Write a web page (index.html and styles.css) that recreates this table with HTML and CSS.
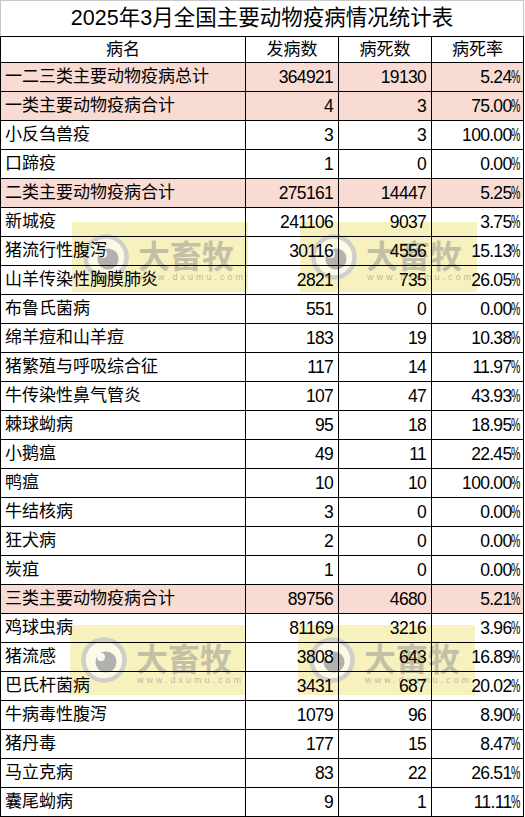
FILE: index.html
```html
<!DOCTYPE html>
<html lang="zh-CN">
<head>
<meta charset="utf-8">
<title>2025年3月全国主要动物疫病情况统计表</title>
<link rel="stylesheet" href="styles.css">
</head>
<body>
<div class="sheet">
  <div class="title">2025年3月全国主要动物疫病情况统计表</div>
  <div class="table">
    <div class="row head"><div class="c name">病名</div><div class="c">发病数</div><div class="c">病死数</div><div class="c">病死率</div></div>
    <div class="row sum"><div class="c name">一二三类主要动物疫病总计</div><div class="c num">364921</div><div class="c num">19130</div><div class="c pc">5.24<span class="p">%</span></div></div>
    <div class="row sum"><div class="c name">一类主要动物疫病合计</div><div class="c num">4</div><div class="c num">3</div><div class="c pc">75.00<span class="p">%</span></div></div>
    <div class="row"><div class="c name">小反刍兽疫</div><div class="c num">3</div><div class="c num">3</div><div class="c pc">100.00<span class="p">%</span></div></div>
    <div class="row"><div class="c name">口蹄疫</div><div class="c num">1</div><div class="c num">0</div><div class="c pc">0.00<span class="p">%</span></div></div>
    <div class="row sum"><div class="c name">二类主要动物疫病合计</div><div class="c num">275161</div><div class="c num">14447</div><div class="c pc">5.25<span class="p">%</span></div></div>
    <div class="row"><div class="c name">新城疫</div><div class="c num">241106</div><div class="c num">9037</div><div class="c pc">3.75<span class="p">%</span></div></div>
    <div class="row"><div class="c name">猪流行性腹泻</div><div class="c num">30116</div><div class="c num">4556</div><div class="c pc">15.13<span class="p">%</span></div></div>
    <div class="row"><div class="c name">山羊传染性胸膜肺炎</div><div class="c num">2821</div><div class="c num">735</div><div class="c pc">26.05<span class="p">%</span></div></div>
    <div class="row"><div class="c name">布鲁氏菌病</div><div class="c num">551</div><div class="c num">0</div><div class="c pc">0.00<span class="p">%</span></div></div>
    <div class="row"><div class="c name">绵羊痘和山羊痘</div><div class="c num">183</div><div class="c num">19</div><div class="c pc">10.38<span class="p">%</span></div></div>
    <div class="row"><div class="c name">猪繁殖与呼吸综合征</div><div class="c num">117</div><div class="c num">14</div><div class="c pc">11.97<span class="p">%</span></div></div>
    <div class="row"><div class="c name">牛传染性鼻气管炎</div><div class="c num">107</div><div class="c num">47</div><div class="c pc">43.93<span class="p">%</span></div></div>
    <div class="row"><div class="c name">棘球蚴病</div><div class="c num">95</div><div class="c num">18</div><div class="c pc">18.95<span class="p">%</span></div></div>
    <div class="row"><div class="c name">小鹅瘟</div><div class="c num">49</div><div class="c num">11</div><div class="c pc">22.45<span class="p">%</span></div></div>
    <div class="row"><div class="c name">鸭瘟</div><div class="c num">10</div><div class="c num">10</div><div class="c pc">100.00<span class="p">%</span></div></div>
    <div class="row"><div class="c name">牛结核病</div><div class="c num">3</div><div class="c num">0</div><div class="c pc">0.00<span class="p">%</span></div></div>
    <div class="row"><div class="c name">狂犬病</div><div class="c num">2</div><div class="c num">0</div><div class="c pc">0.00<span class="p">%</span></div></div>
    <div class="row"><div class="c name">炭疽</div><div class="c num">1</div><div class="c num">0</div><div class="c pc">0.00<span class="p">%</span></div></div>
    <div class="row sum"><div class="c name">三类主要动物疫病合计</div><div class="c num">89756</div><div class="c num">4680</div><div class="c pc">5.21<span class="p">%</span></div></div>
    <div class="row"><div class="c name">鸡球虫病</div><div class="c num">81169</div><div class="c num">3216</div><div class="c pc">3.96<span class="p">%</span></div></div>
    <div class="row"><div class="c name">猪流感</div><div class="c num">3808</div><div class="c num">643</div><div class="c pc">16.89<span class="p">%</span></div></div>
    <div class="row"><div class="c name">巴氏杆菌病</div><div class="c num">3431</div><div class="c num">687</div><div class="c pc">20.02<span class="p">%</span></div></div>
    <div class="row"><div class="c name">牛病毒性腹泻</div><div class="c num">1079</div><div class="c num">96</div><div class="c pc">8.90<span class="p">%</span></div></div>
    <div class="row"><div class="c name">猪丹毒</div><div class="c num">177</div><div class="c num">15</div><div class="c pc">8.47<span class="p">%</span></div></div>
    <div class="row"><div class="c name">马立克病</div><div class="c num">83</div><div class="c num">22</div><div class="c pc">26.51<span class="p">%</span></div></div>
    <div class="row"><div class="c name">囊尾蚴病</div><div class="c num">9</div><div class="c num">1</div><div class="c pc">11.11<span class="p">%</span></div></div>
  </div>

  <div class="wm wm-a">
    <svg class="logo" width="70" height="70" viewBox="0 0 70 70"><circle cx="34" cy="35" r="20.5" fill="rgba(255,255,255,0.6)" stroke="rgba(200,200,200,0.85)" stroke-width="4.5"/><circle cx="36" cy="37" r="10.5" fill="rgba(165,165,165,0.85)"/><circle cx="31" cy="32" r="4" fill="rgba(255,255,255,0.9)"/></svg>
    <div class="brand">大畜牧</div><div class="url">www.dxumu.com</div>
  </div>
  <div class="wm wm-b">
    <svg class="logo" width="70" height="70" viewBox="0 0 70 70"><circle cx="34" cy="35" r="20.5" fill="rgba(255,255,255,0.6)" stroke="rgba(200,200,200,0.85)" stroke-width="4.5"/><circle cx="36" cy="37" r="10.5" fill="rgba(165,165,165,0.85)"/><circle cx="31" cy="32" r="4" fill="rgba(255,255,255,0.9)"/></svg>
    <div class="brand">大畜牧</div><div class="url">www.dxumu.com</div>
  </div>
  <div class="wm wm-c">
    <svg class="logo" width="70" height="70" viewBox="0 0 70 70"><circle cx="34" cy="35" r="20.5" fill="rgba(255,255,255,0.6)" stroke="rgba(200,200,200,0.85)" stroke-width="4.5"/><circle cx="36" cy="37" r="10.5" fill="rgba(165,165,165,0.85)"/><circle cx="31" cy="32" r="4" fill="rgba(255,255,255,0.9)"/></svg>
    <div class="brand">大畜牧</div><div class="url">www.dxumu.com</div>
  </div>
  <div class="wm wm-d">
    <svg class="logo" width="70" height="70" viewBox="0 0 70 70"><circle cx="34" cy="35" r="20.5" fill="rgba(255,255,255,0.6)" stroke="rgba(200,200,200,0.85)" stroke-width="4.5"/><circle cx="36" cy="37" r="10.5" fill="rgba(165,165,165,0.85)"/><circle cx="31" cy="32" r="4" fill="rgba(255,255,255,0.9)"/></svg>
    <div class="brand">大畜牧</div><div class="url">www.dxumu.com</div>
  </div>
</div>
</body>
</html>
```
FILE: styles.css
```css
* { box-sizing: border-box; }
html, body { margin: 0; padding: 0; background: #fff; }
body {
  font-family: "Liberation Sans", "Noto Sans CJK SC", sans-serif;
  color: #000;
}
.sheet {
  position: relative;
  width: 525px;
}
.title {
  height: 36px;
  border: 1px solid #c8c8c8;
  border-bottom: none;
  width: 524px;
  font-size: 21.5px;
  line-height: 34px;
  text-align: center;
}
.table {
  position: relative;
  z-index: 2;
  border-left: 1px solid #000;
  border-top: 1px solid #000;
  width: 524px;
}
.row {
  display: grid;
  grid-template-columns: 245px 93px 93px 92px;
  height: 29px;
}
.row.head { height: 26px; }
.row.sum { background: #f8dcd3; }
.c {
  border-right: 1px solid #000;
  border-bottom: 1px solid #000;
  font-size: 17px;
  line-height: 28px;
  white-space: nowrap;
  overflow: hidden;
}
.head .c {
  text-align: center;
  line-height: 25px;
}
.row .name { padding-left: 4px; }
.head .name { padding-left: 0; }
.num, .pc {
  text-align: right;
  letter-spacing: -0.7px;
  font-size: 17.5px;
}
.num { padding-right: 5px; }
.pc { padding-right: 2px; }
.p {
  display: inline-block;
  transform: scaleX(0.6);
  transform-origin: left center;
  margin-right: -6px;
  letter-spacing: 0;
}

.wm {
  position: absolute;
  z-index: 1;
  width: 176px;
  height: 70px;
  background: rgba(238, 224, 110, 0.45);
}
.wm-a { left: 72px; top: 222px; }
.wm-b { left: 300px; top: 222px; width: 177px; }
.wm-c { left: 70px; top: 625px; }
.wm-d { left: 298px; top: 625px; width: 177px; }
.logo {
  position: absolute;
  left: 0;
  top: 0;
}
.brand {
  position: absolute;
  left: 66px;
  top: 12px;
  font-family: "Noto Sans CJK SC", sans-serif;
  font-weight: 700;
  font-size: 32px;
  line-height: 40px;
  color: rgba(150, 150, 150, 0.55);
}
.url {
  position: absolute;
  left: 67px;
  top: 50px;
  font-family: "Liberation Sans", sans-serif;
  font-size: 9px;
  line-height: 10px;
  letter-spacing: 3px;
  color: rgba(150, 150, 150, 0.65);
}
```
